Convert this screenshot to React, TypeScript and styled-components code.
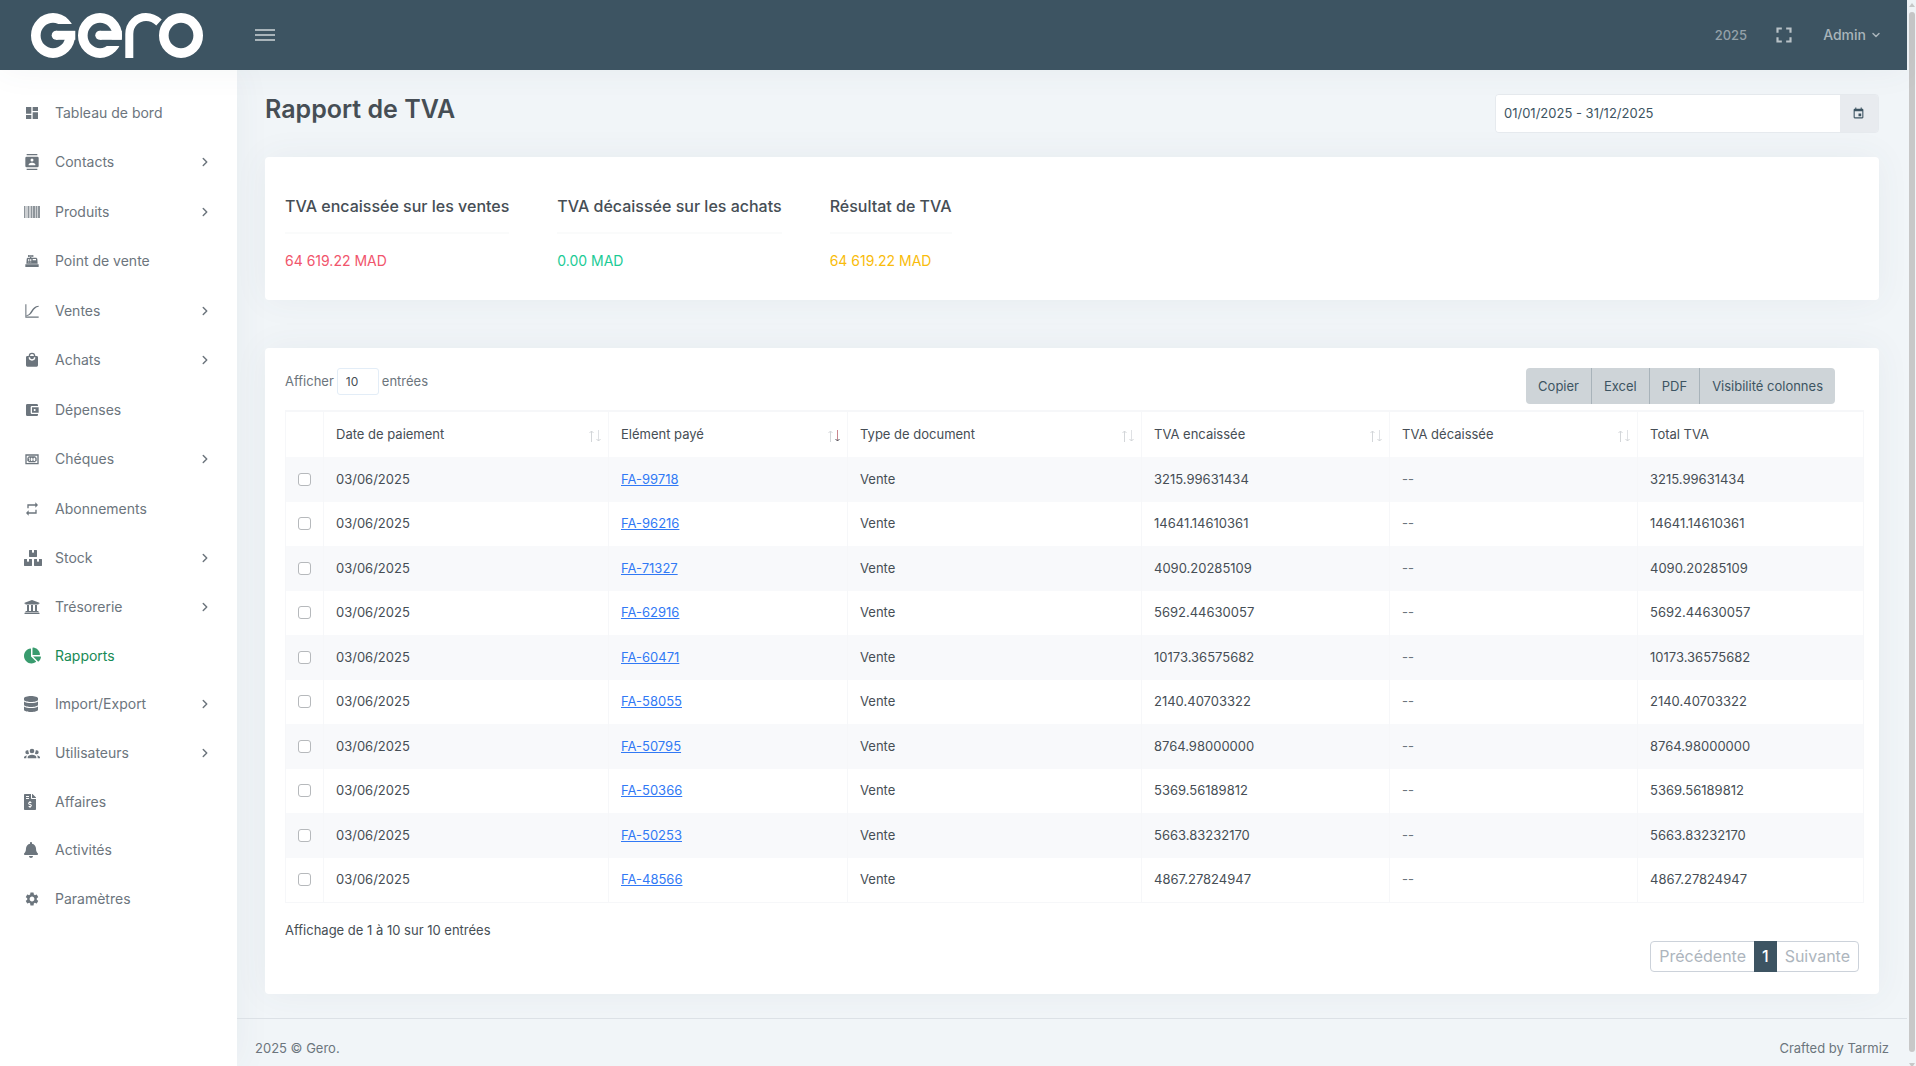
import React from "react";
import styled, { createGlobalStyle, css } from "styled-components";
import { FaBell, FaBoxes, FaChartPie, FaDatabase, FaFileInvoiceDollar, FaUniversity } from "react-icons/fa";
import { MdAccountBalanceWallet, MdEvent, MdFullscreen, MdRepeat, MdSettings } from "react-icons/md";
import { ChevronDown, ChevronRight } from "lucide-react";

const slate = "#3d5462";
const ink = "#464e55";
const muted = "#6c757d";
const line = "#f6f7f9";
const shadow = "0 0 35px 0 rgba(66, 80, 102, 0.06)";

const GlobalStyle = createGlobalStyle`
  *, *::before, *::after { box-sizing: border-box; }
  body {
    margin: 0;
    background: #f1f5f8;
    color: ${ink};
    font-family: Inter, "Liberation Sans", sans-serif;
    font-size: 13px;
    line-height: 20px;
  }
  button, input, select { font: inherit; color: inherit; margin: 0; }
  h1, h2, p, ul, hr { margin: 0; padding: 0; }
`;

const Window = styled.div`
  display: flex;
  min-height: 100vh;
`;

const Page = styled.div`
  flex: 1;
  min-width: 0;
  display: flex;
  flex-direction: column;
`;

const TopBar = styled.header`
  position: relative;
  z-index: 2;
  display: flex;
  align-items: center;
  height: 70px;
  padding: 0 25px 0 31px;
  background: ${slate};
  box-shadow: ${shadow};
  color: #a9b4ba;
`;

const LogoLink = styled.a`
  display: block;
  width: 224px;
  svg { display: block; }
`;

const IconButton = styled.button`
  display: flex;
  align-items: center;
  justify-content: center;
  border: 0;
  padding: 0;
  background: none;
  cursor: pointer;
`;

const TopTools = styled.div`
  display: flex;
  align-items: center;
  gap: 24px;
  margin-left: auto;
  font-weight: 500;
`;

const Year = styled.span`
  color: #94a1a9;
`;

const UserButton = styled(IconButton)`
  gap: 4px;
  font-size: 14px;
  margin-left: 2px;
`;

const Body = styled.div`
  flex: 1;
  display: flex;
`;

const Sidebar = styled.nav`
  flex: none;
  width: 237px;
  padding-top: 18px;
  background: #fff;
  box-shadow: ${shadow};
`;

const MenuGroup = styled.ul<{ $height: number }>`
  display: grid;
  grid-auto-rows: 1fr;
  min-height: ${(p) => p.$height}px;
  list-style: none;
`;

const MenuLink = styled.a<{ $active?: boolean }>`
  display: grid;
  grid-template-columns: 31px 1fr 14px;
  align-items: center;
  height: 100%;
  padding: 0 25px 0 24px;
  color: ${(p) => (p.$active ? "#178a55" : muted)};
  font-size: 14px;
  text-decoration: none;
  svg { display: block; opacity: ${(p) => (p.$active ? 0.85 : 1)}; }
`;

const Main = styled.div`
  flex: 1;
  min-width: 0;
  display: flex;
  flex-direction: column;
`;

const Content = styled.main`
  padding: 24px 28px 24px;
`;

const TitleRow = styled.div`
  display: flex;
  justify-content: space-between;
  align-items: flex-start;
  margin-bottom: 24px;
`;

const Title = styled.h1`
  font-size: 25px;
  line-height: 31px;
  font-weight: 600;
`;

const DateGroup = styled.div`
  display: flex;
  width: 384px;
  height: 39px;
  border: 1px solid #e6eaee;
  border-radius: 4px;
  overflow: hidden;
`;

const DateInput = styled.input`
  flex: 1;
  min-width: 0;
  border: 0;
  padding: 0 8px 1px;
  background: #fff;
  color: ${slate};
`;

const DateButton = styled(IconButton)`
  width: 38px;
  padding: 0 1px 1px 0;
  background: #e8ebef;
  color: ${slate};
`;

const Card = styled.section`
  border-radius: 4px;
  background: #fff;
  box-shadow: ${shadow};
`;

const Summary = styled(Card)`
  display: flex;
  gap: 48px;
  height: 143px;
  margin-bottom: 48px;
  padding: 39px 20px;
`;

const Heading = styled.h2`
  font-size: 16px;
  line-height: 20px;
  font-weight: 500;
`;

const Rule = styled.hr`
  margin: 16px 0 17px;
  border: 0;
  border-top: 2px solid #fafbfb;
`;

const Amount = styled.p<{ $color: string }>`
  font-size: 14px;
  color: ${(p) => p.$color};
`;

const Report = styled(Card)`
  padding: 20px 16px 22px 20px;
`;

const Toolbar = styled.div`
  display: flex;
  justify-content: space-between;
  align-items: flex-start;
  padding-right: 28px;
  margin-bottom: 6px;
`;

const LengthLabel = styled.label`
  display: flex;
  align-items: center;
  gap: 3px;
  color: ${muted};
  span { padding-bottom: 2px; }
`;

const LengthSelect = styled.select`
  appearance: none;
  width: 42px;
  height: 27px;
  padding: 0 8px;
  border: 1px solid #e3edf7;
  border-radius: 3px;
  background: #fff;
  color: ${ink};
  font-size: 12px;
`;

const ButtonGroup = styled.div`
  display: flex;
  border-radius: 4px;
  overflow: hidden;
`;

const ExportButton = styled.button`
  height: 36px;
  padding: 0 12px 1px;
  border: 0;
  background: #ced4d8;
  color: ${slate};
  & + & { border-left: 1px solid #a8b3ba; }
`;

const Table = styled.table`
  width: 100%;
  table-layout: fixed;
  border-collapse: collapse;
  border: 1px solid ${line};
  border-top-width: 2px;
`;

const HeadCell = styled.th`
  height: 46px;
  padding: 0 6px 2px 12px;
  border-left: 1px solid ${line};
  font-weight: 400;
  text-align: left;
`;

const HeadInner = styled.div`
  display: flex;
  justify-content: space-between;
  align-items: center;
  svg { margin-top: 5px; }
`;

const Row = styled.tr`
  height: 44px;
  &:nth-child(odd) { height: 45px; background: #f8f9fb; }
`;

const Cell = styled.td<{ $soft?: boolean }>`
  padding: 0 12px 2px;
  border-left: 1px solid ${line};
  ${(p) => p.$soft && css`color: ${muted};`}
`;

const Check = styled.input`
  appearance: none;
  display: block;
  width: 13px;
  height: 13px;
  margin: 1px 0 0;
  border: 1px solid #b6b9bc;
  border-radius: 3px;
  background: #fff;
`;

const DocLink = styled.a`
  color: #3179f5;
  text-decoration: underline;
`;

const Info = styled.p`
  margin: 17px 0 1px;
`;

const Pager = styled.div`
  display: flex;
  width: max-content;
  height: 31px;
  margin: 0 4px 0 auto;
  border: 1px solid #ccd2da;
  border-radius: 4px;
`;

const PageButton = styled.button<{ $current?: boolean }>`
  padding: 0 8px;
  border: 0;
  background: none;
  color: #adb5bd;
  font-size: 16px;
  ${(p) =>
    p.$current &&
    css`
      margin: -1px 0;
      background: ${slate};
      color: #fff;
      font-weight: 500;
    `}
`;

const Footer = styled.footer`
  flex: 1;
  display: flex;
  justify-content: space-between;
  padding: 19px 18px 8px;
  border-top: 1px solid #dce1e6;
  color: ${muted};
`;

const ScrollTrack = styled.div`
  flex: none;
  display: flex;
  flex-direction: column;
  align-items: center;
  gap: 5px;
  width: 9px;
  padding: 3px 1px 0 2px;
  background: #f1f5f8;
`;

const ScrollThumb = styled.div`
  flex: 1;
  width: 6px;
  margin-bottom: 6px;
  border-radius: 3px;
  background: #c8c8c8;
`;

const Mdi = ({ d, size = 16 }: { d: string; size?: number }) => (
  <svg width={size} height={size} viewBox="0 0 24 24" fill="currentColor" aria-hidden>
    <path fillRule="evenodd" d={d} />
  </svg>
);

const Barcode = () => (
  <svg width="16" height="16" viewBox="0 0 16 16" fill="currentColor" aria-hidden>
    <path d="M0 2h16v12H0z" opacity="0.35" />
    <path d="M0 2h1v12H0zM4 2h1v12H4zM7 2h1v12H7zM9 2h2v12H9zM12 2h1v12h-1zM14 2h2v12h-2z" opacity="0.65" />
  </svg>
);

const Logo = () => (
  <svg width="174" height="46" viewBox="31 12 174 46" fill="none" stroke="#fff" strokeWidth="9.6" aria-label="Gero" role="img">
    <ellipse cx="53" cy="35.5" rx="17.2" ry="17.6" />
    <path d="M57 24H77V31H53z" fill={slate} stroke="none" />
    <path d="M56 35.300H75.300" strokeWidth="9" />
    <circle cx="56.2" cy="35.3" r="4.5" fill="#fff" stroke="none" />
    <ellipse cx="100" cy="35.500" rx="17.2" ry="17.6" />
    <path d="M104 39.500H124V46H102z" fill={slate} stroke="none" />
    <path d="M99.800 35.300H121.800" strokeWidth="9" />
    <circle cx="99.8" cy="35.3" r="4.5" fill="#fff" stroke="none" />
    <path d="M129.300 58V34C129.300 24 137 17 146 17C151 17 155 18.800 159 22.500" strokeWidth="8" />
    <ellipse cx="181" cy="35.5" rx="17.2" ry="17.6" />
  </svg>
);

const SortArrows = ({ sorted }: { sorted?: boolean }) => (
  <svg width="14" height="14" viewBox="0 0 14 14" fill="none" aria-hidden>
    <path d="M3.500 13V2M1.500 4l2-2 2 2" stroke="#d3d6d9" />
    <path d="M10.500 1v11" stroke={sorted ? "#c9868e" : "#dfe1e4"} />
    <path d="M8.500 10l2 2 2-2" stroke={sorted ? "#4a4f57" : "#cfd2d5"} />
  </svg>
);

type Item = { label: string; icon: React.ReactNode; more?: boolean; active?: boolean };

const mainMenu: Item[] = [
  { label: "Tableau de bord", icon: <Mdi d="M13,3V9H21V3M13,21H21V11H13M3,21H11V15H3M3,13H11V3H3V13Z" /> },
  { label: "Contacts", more: true, icon: <Mdi d="M20,0H4V2H20V0M4,24H20V22H4V24M20,4H4A2,2 0 0,0 2,6V18A2,2 0 0,0 4,20H20A2,2 0 0,0 22,18V6A2,2 0 0,0 20,4M12,6.75A2.25,2.25 0 0,1 14.25,9A2.25,2.25 0 0,1 12,11.25A2.25,2.25 0 0,1 9.75,9A2.25,2.25 0 0,1 12,6.75M17,17H7V15.5C7,13.83 10.33,13 12,13C13.67,13 17,13.83 17,15.5V17Z" /> },
  { label: "Produits", more: true, icon: <Barcode /> },
  { label: "Point de vente", icon: <Mdi d="M2 17H22V21H2V17M6.25 7H9V6H6V3H14V6H11V7H17.8C18.8 7 19.8 8 20 9L20.5 16H3.5L4.05 9C4.05 8 5.05 7 6.25 7M13 9V11H18V9H13M6 9V10H8V9H6M9 9V10H11V9H9M6 11V12H8V11H6M9 11V12H11V11H9M6 13V14H8V13H6M9 13V14H11V13H9M7 4V5H13V4H7Z" /> },
  { label: "Ventes", more: true, icon: <Mdi d="M2 2H3.600V20.400H22V22H2ZM4 18C11 18 10 5 22 4V5.800C13 6.500 13 19.500 4 19.600Z" /> },
  { label: "Achats", more: true, icon: <Mdi d="M12,13A5,5 0 0,1 7,8H9A3,3 0 0,0 12,11A3,3 0 0,0 15,8H17A5,5 0 0,1 12,13M12,3A3,3 0 0,1 15,6H9A3,3 0 0,1 12,3M19,6H17A5,5 0 0,0 12,1A5,5 0 0,0 7,6H5C3.89,6 3,6.89 3,8V20A2,2 0 0,0 5,22H19A2,2 0 0,0 21,20V8C21,6.89 20.1,6 19,6Z" /> },
  { label: "Dépenses", icon: <MdAccountBalanceWallet size={16} /> },
  { label: "Chéques", more: true, icon: <Mdi d="M2,5H22V20H2V5M20,18V7H4V18H20M17,8A2,2 0 0,0 19,10V15A2,2 0 0,0 17,17H7A2,2 0 0,0 5,15V10A2,2 0 0,0 7,8H17M17,13V12C17,10.9 16.33,10 15.5,10C14.67,10 14,10.9 14,12V13C14,14.1 14.67,15 15.5,15C16.33,15 17,14.1 17,13M13,13V12C13,10.9 12.33,10 11.5,10C10.67,10 10,10.9 10,12V13C10,14.1 10.67,15 11.5,15C12.33,15 13,14.1 13,13M8,15H9V10H8L7,10.5V11.5L8,11V15Z" /> },
  { label: "Abonnements", icon: <MdRepeat size={16} /> },
  { label: "Stock", more: true, icon: <FaBoxes size={18} /> },
];

const adminMenu: Item[] = [
  { label: "Trésorerie", more: true, icon: <FaUniversity size={16} /> },
  { label: "Rapports", active: true, icon: <FaChartPie size={17} /> },
  { label: "Import/Export", more: true, icon: <FaDatabase size={16} preserveAspectRatio="xMinYMid" /> },
  { label: "Utilisateurs", more: true, icon: <Mdi d="M12,5.5A3.5,3.5 0 0,1 15.5,9A3.5,3.5 0 0,1 12,12.5A3.5,3.5 0 0,1 8.5,9A3.5,3.5 0 0,1 12,5.5M5,8C5.56,8 6.08,8.15 6.53,8.42C6.38,9.85 6.8,11.27 7.66,12.38C7.16,13.34 6.16,14 5,14A3,3 0 0,1 2,11A3,3 0 0,1 5,8M19,8A3,3 0 0,1 22,11A3,3 0 0,1 19,14C17.84,14 16.84,13.34 16.34,12.38C17.2,11.27 17.62,9.85 17.47,8.42C17.92,8.15 18.44,8 19,8M5.5,18.25C5.5,16.18 8.41,14.5 12,14.5C15.59,14.5 18.5,16.18 18.5,18.25V20H5.5V18.25M0,20V18.5C0,17.11 1.89,15.94 4.45,15.6C3.86,16.28 3.5,17.22 3.5,18.25V20H0M24,20H20.5V18.25C20.5,17.22 20.14,16.28 19.55,15.6C22.11,15.94 24,17.11 24,18.5V20Z" /> },
  { label: "Affaires", icon: <FaFileInvoiceDollar size={16} preserveAspectRatio="xMinYMid" /> },
  { label: "Activités", icon: <FaBell size={16} preserveAspectRatio="xMinYMid" /> },
  { label: "Paramètres", icon: <MdSettings size={16} /> },
];

const Menu = ({ items, height }: { items: Item[]; height: number }) => (
  <MenuGroup $height={height}>
    {items.map((item) => (
      <li key={item.label}>
        <MenuLink href="#" $active={item.active} aria-current={item.active ? "page" : undefined}>
          {item.icon}
          <span>{item.label}</span>
          {item.more && <ChevronRight size={14} strokeWidth={2.5} />}
        </MenuLink>
      </li>
    ))}
  </MenuGroup>
);

const totals = [
  { title: "TVA encaissée sur les ventes", value: "64 619.22 MAD", color: "#f1556c" },
  { title: "TVA décaissée sur les achats", value: "0.00 MAD", color: "#1ccb96" },
  { title: "Résultat de TVA", value: "64 619.22 MAD", color: "#f9bc0b" },
];

const columns = [
  { title: "", width: 38 },
  { title: "Date de paiement", width: 285, sort: true },
  { title: "Elément payé", width: 239, sort: true, sorted: true },
  { title: "Type de document", width: 294, sort: true },
  { title: "TVA encaissée", width: 248, sort: true },
  { title: "TVA décaissée", width: 248, sort: true },
  { title: "Total TVA", width: 226 },
];

const rows = [
  ["FA-99718", "3215.99631434"],
  ["FA-96216", "14641.14610361"],
  ["FA-71327", "4090.20285109"],
  ["FA-62916", "5692.44630057"],
  ["FA-60471", "10173.36575682"],
  ["FA-58055", "2140.40703322"],
  ["FA-50795", "8764.98000000"],
  ["FA-50366", "5369.56189812"],
  ["FA-50253", "5663.83232170"],
  ["FA-48566", "4867.27824947"],
];

export default function App() {
  return (
    <>
      <GlobalStyle />
      <Window>
        <Page>
          <TopBar>
            <LogoLink href="#"><Logo /></LogoLink>
            <IconButton aria-label="Menu">
              <svg width="20" height="14" viewBox="0 0 20 14" fill="#a9b4ba" aria-hidden>
                <path d="M0 1h20v2H0zM0 6h20v2H0zM0 11h20v2H0z" />
              </svg>
            </IconButton>
            <TopTools>
              <Year>2025</Year>
              <IconButton aria-label="Plein écran"><MdFullscreen size={26} color="#b9c2c7" /></IconButton>
              <UserButton>Admin <ChevronDown size={12} strokeWidth={3} /></UserButton>
            </TopTools>
          </TopBar>
          <Body>
            <Sidebar aria-label="Menu principal">
              <Menu items={mainMenu} height={495} />
              <Menu items={adminMenu} height={340} />
            </Sidebar>
            <Main>
              <Content>
                <TitleRow>
                  <Title>Rapport de TVA</Title>
                  <DateGroup>
                    <DateInput aria-label="Période" defaultValue="01/01/2025 - 31/12/2025" />
                    <DateButton aria-label="Calendrier"><MdEvent size={13} /></DateButton>
                  </DateGroup>
                </TitleRow>
                <Summary>
                  {totals.map((t) => (
                    <div key={t.title}>
                      <Heading>{t.title}</Heading>
                      <Rule />
                      <Amount $color={t.color}>{t.value}</Amount>
                    </div>
                  ))}
                </Summary>
                <Report>
                  <Toolbar>
                    <LengthLabel>
                      <span>Afficher</span>
                      <LengthSelect defaultValue="10">
                        <option>10</option>
                      </LengthSelect>
                      <span>entrées</span>
                    </LengthLabel>
                    <ButtonGroup>
                      <ExportButton>Copier</ExportButton>
                      <ExportButton>Excel</ExportButton>
                      <ExportButton>PDF</ExportButton>
                      <ExportButton>Visibilité colonnes</ExportButton>
                    </ButtonGroup>
                  </Toolbar>
                  <Table>
                    <colgroup>
                      {columns.map((c) => <col key={c.title} width={c.width} />)}
                    </colgroup>
                    <thead>
                      <tr>
                        {columns.map((c) => (
                          <HeadCell key={c.title}>
                            <HeadInner>
                              {c.title}
                              {c.sort && <SortArrows sorted={c.sorted} />}
                            </HeadInner>
                          </HeadCell>
                        ))}
                      </tr>
                    </thead>
                    <tbody>
                      {rows.map(([doc, amount]) => (
                        <Row key={doc}>
                          <Cell><Check type="checkbox" aria-label={doc} /></Cell>
                          <Cell>03/06/2025</Cell>
                          <Cell><DocLink href="#">{doc}</DocLink></Cell>
                          <Cell>Vente</Cell>
                          <Cell>{amount}</Cell>
                          <Cell $soft>--</Cell>
                          <Cell>{amount}</Cell>
                        </Row>
                      ))}
                    </tbody>
                  </Table>
                  <Info>Affichage de 1 à 10 sur 10 entrées</Info>
                  <Pager>
                    <PageButton>Précédente</PageButton>
                    <PageButton $current aria-current="page">1</PageButton>
                    <PageButton>Suivante</PageButton>
                  </Pager>
                </Report>
              </Content>
              <Footer>
                <span>2025 © Gero.</span>
                <span>Crafted by Tarmiz</span>
              </Footer>
            </Main>
          </Body>
        </Page>
        <ScrollTrack aria-hidden>
          <svg width="6" height="4" viewBox="0 0 6 4" fill="#c8c8c8"><path d="M3 0l3 4H0z" /></svg>
          <ScrollThumb />
          <svg width="6" height="3" viewBox="0 0 6 3" fill="#c8c8c8"><path d="M0 0h6L4 3H2z" /></svg>
        </ScrollTrack>
      </Window>
    </>
  );
}
